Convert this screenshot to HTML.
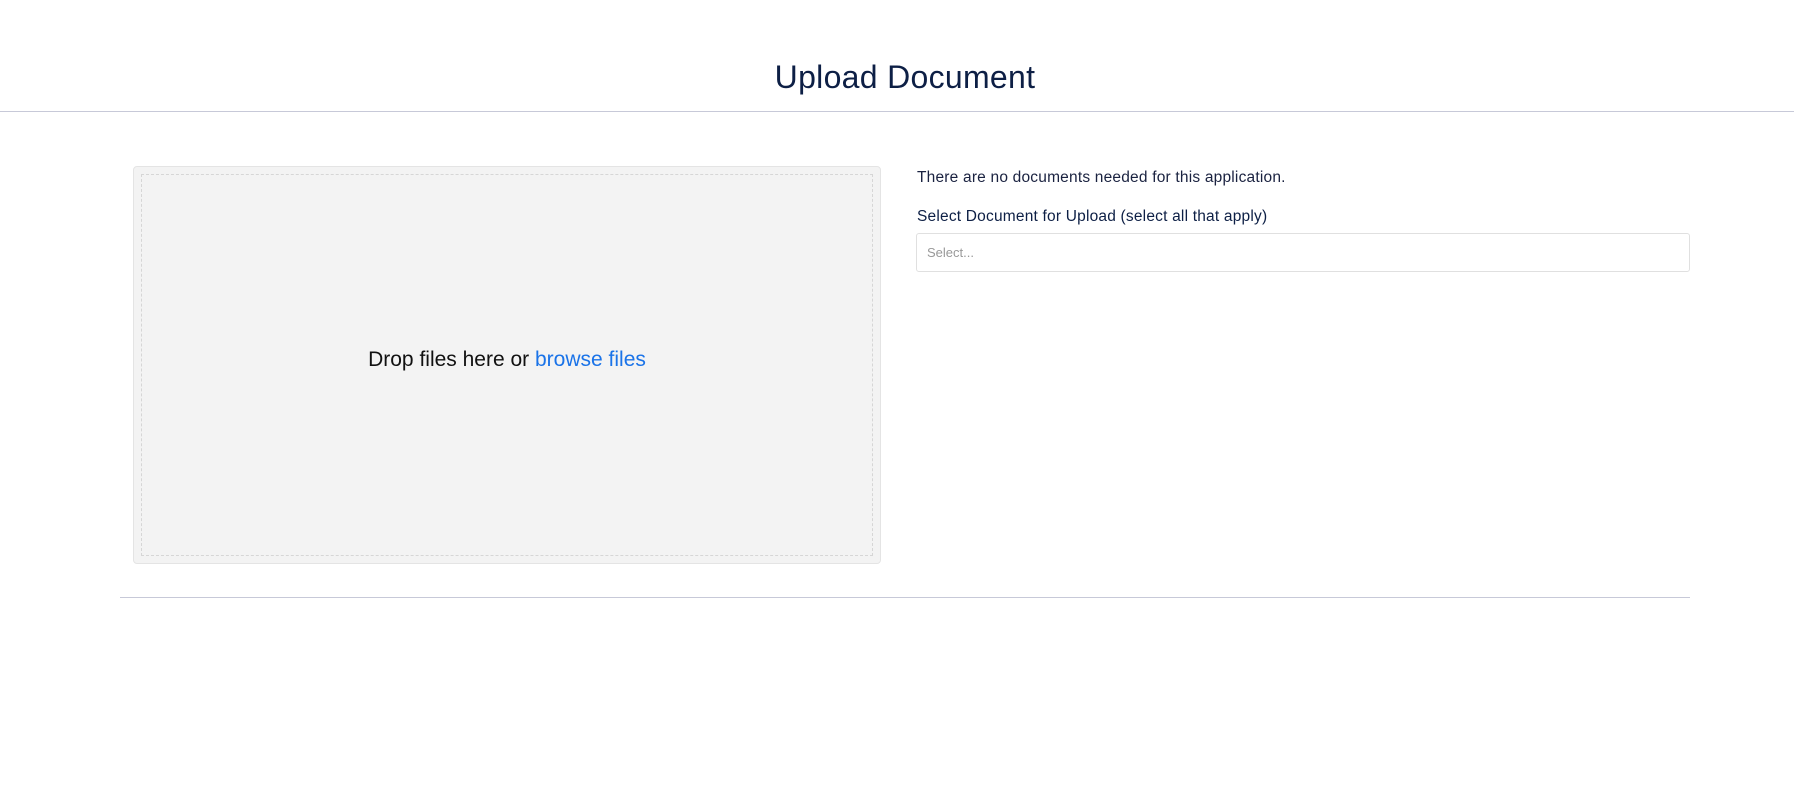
<!DOCTYPE html>
<html><head><meta charset="utf-8"><style>
body{margin:0;width:1794px;height:786px;background:#fff;font-family:"Liberation Sans",sans-serif;position:relative;overflow:hidden}
.t{position:absolute;left:16px;right:0;top:57px;text-align:center;font-size:32px;color:#0d1f45;line-height:40px;letter-spacing:0.3px}
.hl{position:absolute;left:0;right:0;top:111px;height:1px;background:#c7c9d8}
.box{position:absolute;left:133px;top:166px;width:746px;height:396px;background:#f3f3f3;border:1px solid #e4e4e4;border-radius:4px}
.in{position:absolute;left:7px;top:7px;right:7px;bottom:7px;border:1px dashed #d6d6d6}
.dt{position:absolute;left:0;right:0;top:179px;text-align:center;font-size:21px;color:#111;line-height:28px}
.dt span{color:#1a73e8}
.p1{position:absolute;left:917px;top:168px;font-size:15.5px;color:#1a2240;line-height:20px;letter-spacing:0.2px}
.p2{position:absolute;left:917px;top:207px;font-size:15.5px;color:#0d1f45;line-height:20px;letter-spacing:0.2px}
.sel{position:absolute;left:916px;top:233px;width:772px;height:37px;border:1px solid #e0e0e0;border-radius:3px}
.sel span{position:absolute;left:10px;top:11px;font-size:13px;color:#999}
.bl{position:absolute;left:120px;top:597px;width:1570px;height:1px;background:#c7c9d8}
</style></head><body>
<div class="t">Upload Document</div>
<div class="hl"></div>
<div class="box"><div class="in"></div><div class="dt">Drop files here or <span>browse files</span></div></div>
<div class="p1">There are no documents needed for this application.</div>
<div class="p2">Select Document for Upload (select all that apply)</div>
<div class="sel"><span>Select...</span></div>
<div class="bl"></div>
</body></html>
